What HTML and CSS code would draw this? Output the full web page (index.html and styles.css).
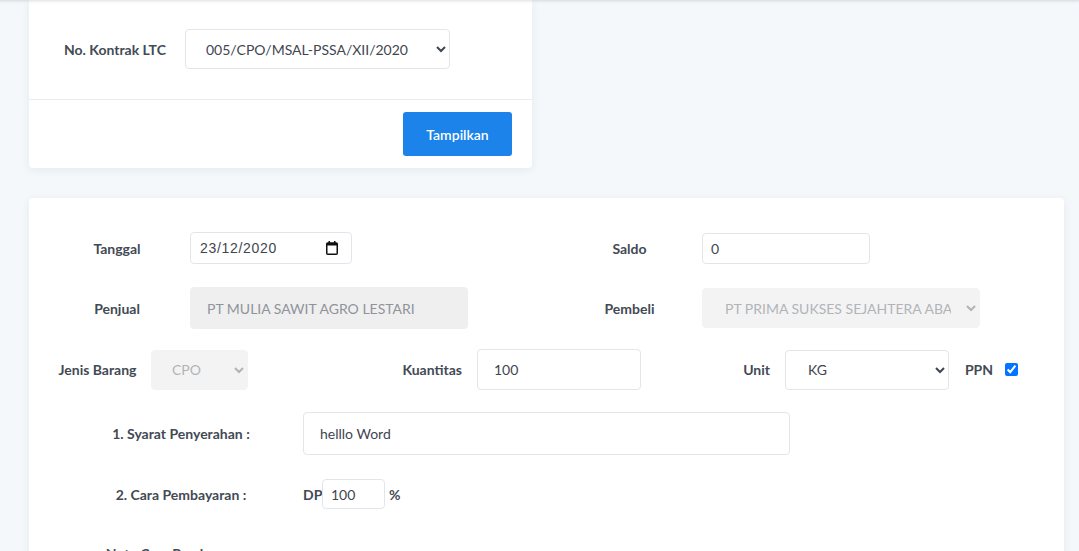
FILE: index.html
```html
<!DOCTYPE html>
<html lang="id">
<head>
<meta charset="utf-8">
<title>Kontrak LTC</title>
<link rel="stylesheet" href="styles.css">
</head>
<body>
<div class="topshadow"></div>
<main class="page">
  <section class="card card-filter">
    <div class="filter-body">
      <label class="lbl lbl-kontrak">No. Kontrak LTC</label>
      <select class="ctl sel-kontrak">
        <option>005/CPO/MSAL-PSSA/XII/2020</option>
      </select>
    </div>
    <div class="filter-footer">
      <button class="btn">Tampilkan</button>
    </div>
  </section>

  <section class="card card-form">
    <div class="row r1">
      <div class="half">
        <label class="lbl lbl-a">Tanggal</label>
        <div class="ctl date-box">
          <input class="date-text" type="text" value="23/12/2020">
          <svg class="cal-icon" width="12" height="14" viewBox="0 0 12 14" aria-hidden="true">
            <rect x="2.5" y="0" width="1.5" height="3" fill="#111"/>
            <rect x="8" y="0" width="1.5" height="3" fill="#111"/>
            <rect x="0.75" y="2" width="10.5" height="11.25" rx="1" fill="none" stroke="#111" stroke-width="1.5"/>
            <rect x="0.75" y="2" width="10.5" height="2.5" fill="#111"/>
          </svg>
        </div>
      </div>
      <div class="half">
        <label class="lbl lbl-b">Saldo</label>
        <input class="ctl in-saldo" type="text" value="0">
      </div>
    </div>

    <div class="row r2">
      <div class="half">
        <label class="lbl lbl-a">Penjual</label>
        <input class="ctl in-penjual" type="text" value="PT MULIA SAWIT AGRO LESTARI" disabled>
      </div>
      <div class="half">
        <label class="lbl lbl-b">Pembeli</label>
        <select class="ctl sel-pembeli" disabled>
          <option>PT PRIMA SUKSES SEJAHTERA ABADI</option>
        </select>
      </div>
    </div>

    <div class="row r3">
      <label class="lbl lbl-jenis">Jenis Barang</label>
      <select class="ctl sel-jenis" disabled>
        <option>CPO</option>
      </select>
      <label class="lbl lbl-kuant">Kuantitas</label>
      <input class="ctl in-kuant" type="text" value="100">
      <label class="lbl lbl-unit">Unit</label>
      <select class="ctl sel-unit">
        <option>KG</option>
      </select>
      <label class="lbl lbl-ppn">PPN</label>
      <input class="chk" type="checkbox" checked>
    </div>

    <div class="row r4">
      <label class="lbl lbl-c">1. Syarat Penyerahan :</label>
      <input class="ctl in-syarat" type="text" value="helllo Word">
    </div>

    <div class="row r5">
      <label class="lbl lbl-c">2. Cara Pembayaran :</label>
      <span class="lbl dp">DP</span>
      <input class="ctl in-dp" type="text" value="100">
      <span class="pct">%</span>
    </div>

    <div class="row r6">
      <label class="lbl lbl-c">Note Cara Pembayaran :</label>
    </div>
  </section>
</main>
</body>
</html>
```

FILE: styles.css
```css
* { box-sizing: border-box; }

html, body {
  margin: 0;
  padding: 0;
  background: #f4f8fb;
  font-family: Lato, "Open Sans", sans-serif;
  font-size: 14px;
  color: #444b55;
  overflow: hidden;
}

.topshadow {
  position: relative;
  z-index: 2;
  height: 0;
  box-shadow: 0 0 3px 1px rgba(60, 70, 85, 0.22);
}

.page {
  padding: 0 15px 0 29px;
}

.card {
  background: #fff;
  border-radius: 4px;
  box-shadow: 0 2px 8px rgba(40, 60, 90, 0.08);
}

/* Filter card */
.card-filter {
  width: 503px;
  border-top-left-radius: 0;
  border-top-right-radius: 0;
}

.filter-body {
  display: flex;
  align-items: center;
  padding: 29px 0 30px 35px;
  border-bottom: 1px solid #e8ebef;
}

.filter-footer {
  display: flex;
  justify-content: flex-end;
  padding: 12px 20px 12px 0;
}

.btn {
  width: 109px;
  height: 44px;
  border: 0;
  border-radius: 3px;
  background: #1b83e9;
  color: #fff;
  font-family: Lato, sans-serif;
  font-size: 14px;
  font-weight: 600;
  cursor: pointer;
}

.lbl {
  font-weight: 700;
  color: #434a54;
  white-space: nowrap;
  flex: none;
}

.lbl-kontrak { width: 121px; }

.ctl {
  flex: none;
  height: 40px;
  border: 1px solid #e2e5eb;
  border-radius: 4px;
  background-color: #fff;
  font-family: Lato, sans-serif;
  font-size: 14px;
  color: #3f4650;
  outline: none;
}

select.ctl { padding: 0 12px 0 16px; }

.sel-kontrak { width: 265px; }

/* Form card */
.card-form {
  margin-top: 30px;
  padding: 34px 15px 0 15px;
  min-height: 400px;
}

.row {
  display: flex;
  align-items: center;
}

.r1 { height: 32px; margin-bottom: 23px; }
.r2 { height: 42px; margin-bottom: 20px; }
.r3 { height: 41px; margin-bottom: 22px; }
.r4 { height: 43px; margin-bottom: 24px; }
.r5 { height: 30px; margin-bottom: 24px; }
.r6 { height: 40px; }

.half {
  flex: none;
  width: 513px;
  display: flex;
  align-items: center;
}

.lbl-a { width: 146px; text-align: center; }
.lbl-b { width: 145px; text-align: center; }

.date-box {
  width: 162px;
  height: 32px;
  display: flex;
  align-items: center;
  padding: 0 13px 0 9px;
}

.date-text {
  flex: 1;
  min-width: 0;
  border: 0;
  padding: 0;
  outline: none;
  background: transparent;
  font-family: "Liberation Sans", Arial, sans-serif;
  font-size: 14px;
  letter-spacing: 0.7px;
  color: #3f4650;
}

.cal-icon { flex: none; display: block; }

.in-saldo {
  width: 168px;
  height: 31px;
  padding: 0 8px;
}

.in-penjual {
  width: 278px;
  height: 42px;
  padding: 0 16px;
  border-color: #efefef;
  background: #efefef;
  color: #8f949a;
}

.sel-pembeli {
  width: 278px;
  height: 40px;
  border-color: #efefef;
  background-color: #efefef;
  color: #8f949a;
  padding-left: 18px !important;
}

.lbl-jenis { width: 107px; text-align: center; }

.sel-jenis {
  width: 97px;
  height: 40px;
  border-color: #efefef;
  background-color: #efefef;
  color: #8f949a;
}

.lbl-kuant { width: 229px; text-align: right; padding-right: 15px; }

.in-kuant {
  width: 164px;
  height: 41px;
  padding: 0 16px;
}

.lbl-unit { width: 144px; text-align: right; padding-right: 15px; }

.sel-unit { width: 164px; height: 40px; padding-left: 18px !important; }

.lbl-ppn { width: 56px; text-align: right; padding-right: 12px; }

.chk {
  flex: none;
  width: 13px;
  height: 13px;
  margin: 0;
}

.lbl-c {
  width: 244px;
  margin-left: 15px;
  text-align: center;
}

.in-syarat {
  width: 487px;
  height: 43px;
  padding: 0 16px;
}

.dp { width: 19px; }

.in-dp {
  width: 63px;
  height: 30px;
  padding: 0 8px;
}

.pct {
  margin-left: 4px;
  font-weight: 700;
  color: #434a54;
}
```
